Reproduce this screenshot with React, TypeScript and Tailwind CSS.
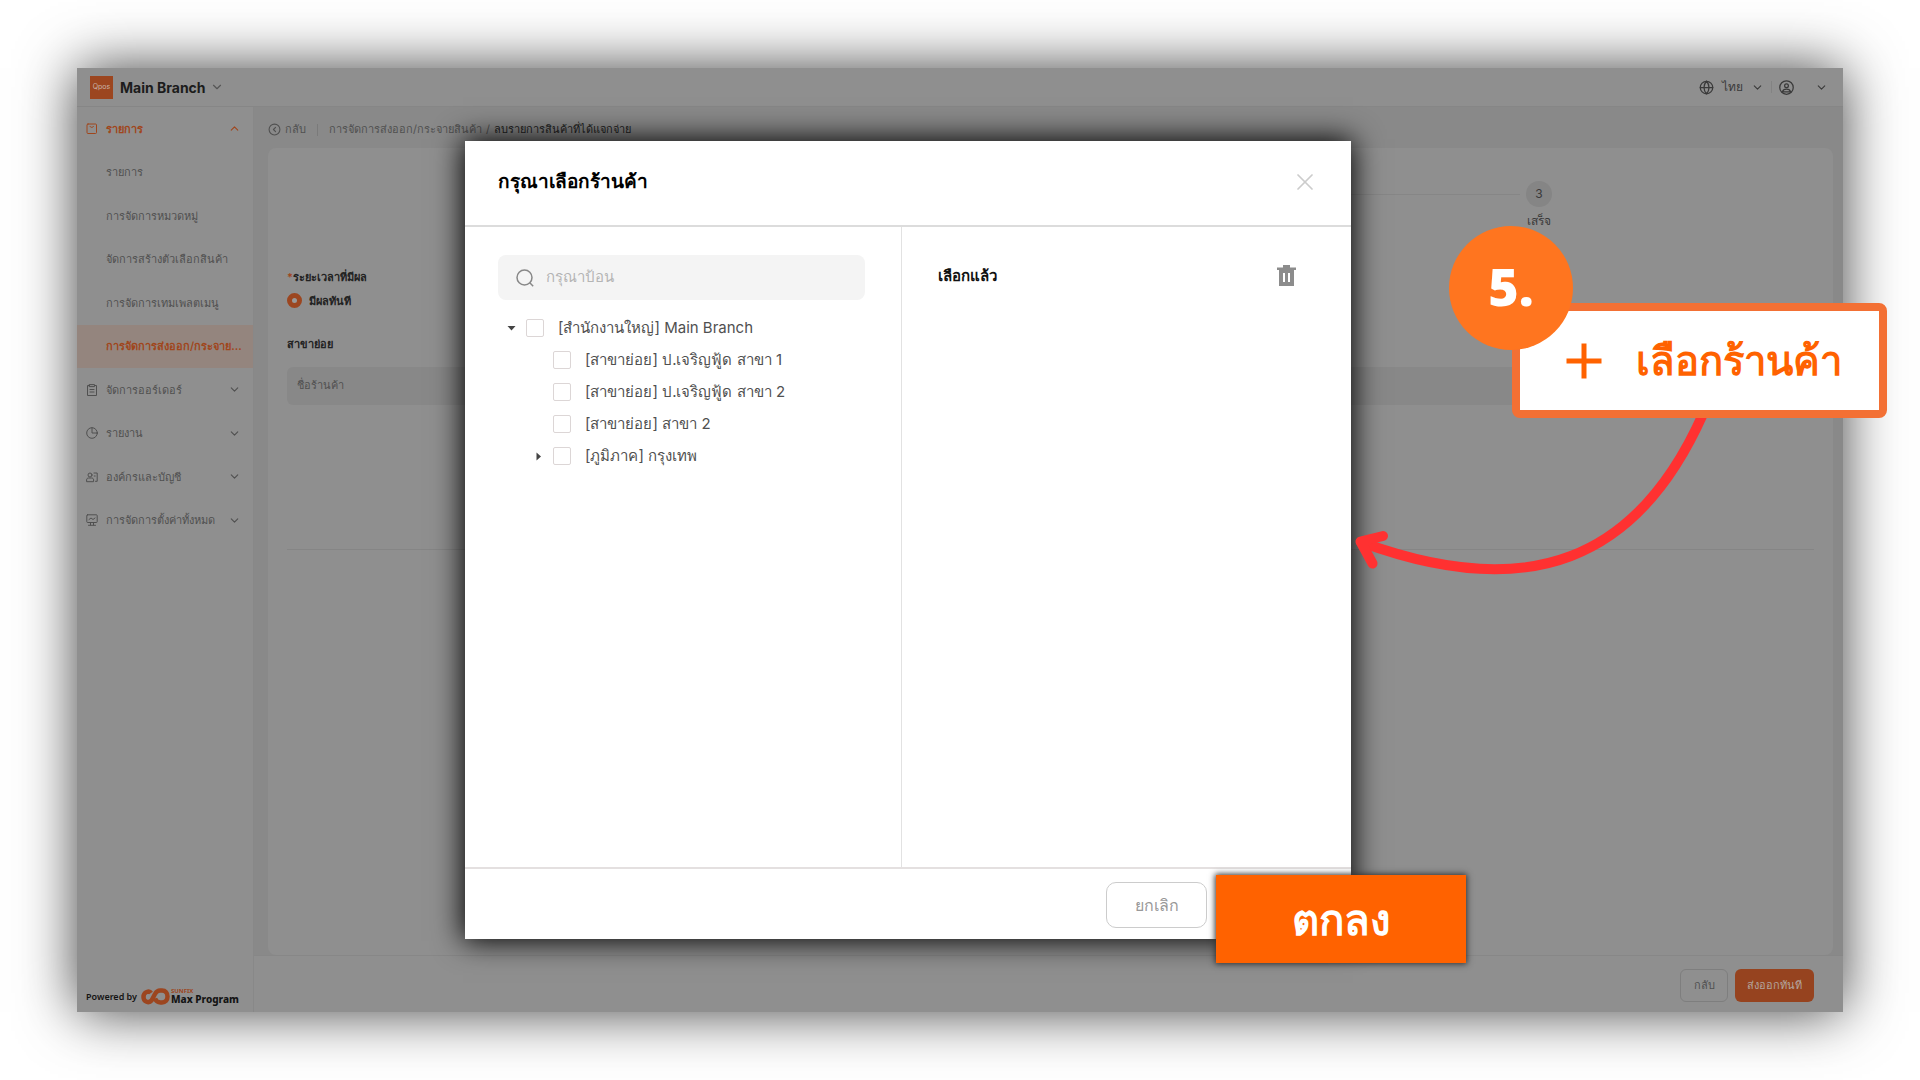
import type { ReactNode } from "react";
import { ChevronDown, ChevronUp, CircleChevronLeft, Globe, Plus, X } from "lucide-react";

const subItems = [
  { label: "รายการ" },
  { label: "การจัดการหมวดหมู่" },
  { label: "จัดการสร้างตัวเลือกสินค้า" },
  { label: "การจัดการเทมเพลตเมนู" },
  { label: "การจัดการส่งออก/กระจาย...", active: true },
];

const groups = [
  { label: "จัดการออร์เดอร์", icon: <OrderIcon /> },
  { label: "รายงาน", icon: <ClockIcon /> },
  { label: "องค์กรและบัญชี", icon: <PeopleIcon /> },
  { label: "การจัดการตั้งค่าทั้งหมด", icon: <BoardIcon /> },
];

const branches = [
  { label: "[สำนักงานใหญ่] Main Branch", level: 0, caret: "down" },
  { label: "[สาขาย่อย] ป.เจริญฟู้ด สาขา 1", level: 1 },
  { label: "[สาขาย่อย] ป.เจริญฟู้ด สาขา 2", level: 1 },
  { label: "[สาขาย่อย] สาขา 2", level: 1 },
  { label: "[ภูมิภาค] กรุงเทพ", level: 1, caret: "right" },
];

function Svg({ size = 12, children }: { size?: number; children: ReactNode }) {
  return (
    <svg width={size} height={size} viewBox="0 0 12 12" fill="none" stroke="currentColor" strokeWidth="1" strokeLinecap="round" strokeLinejoin="round">
      {children}
    </svg>
  );
}

function MenuIcon() {
  return (
    <Svg>
      <rect x="1" y="1" width="9.5" height="9.5" rx="1" />
      <path d="M4 3.5c.5 1.3 3 1.3 3.5 0" />
    </Svg>
  );
}

function OrderIcon() {
  return (
    <Svg>
      <path d="M3.500 1.500H1.500v10h9v-10h-2M3.500 .6h5v2h-5zM4 5.500h4M4 8h4" />
    </Svg>
  );
}

function ClockIcon() {
  return (
    <Svg>
      <circle cx="6" cy="6" r="5.3" />
      <path d="M6 .8V6h5.2" />
    </Svg>
  );
}

function PeopleIcon() {
  return (
    <Svg>
      <circle cx="4" cy="4" r="2" />
      <path d="M.6 10.300V9c0-1.300.8-2 2-2h3c1.200 0 2 .7 2 2v1.300zM8 2h3.200v8.300H9.500M8.200 5h1" />
    </Svg>
  );
}

function BoardIcon() {
  return (
    <Svg>
      <rect x=".8" y=".8" width="10.400" height="7.700" rx=".8" />
      <path d="M3 5.500l2-1.500 2 1.500 2-1.500M2.500 11.300h7M4.500 8.500v2.500M7.500 8.500v2.500" />
    </Svg>
  );
}

function UserIcon() {
  return (
    <Svg size={15}>
      <circle cx="6" cy="6" r="5.400" />
      <circle cx="6" cy="4.500" r="1.500" />
      <path d="M2.800 9.500c.6-3 5.800-3 6.400 0z" />
    </Svg>
  );
}

function TrashIcon() {
  return (
    <svg width="19" height="21" viewBox="0 0 19 21" fill="currentColor">
      <path d="M6 0h7v2.500h6V5H0V2.500h6z" />
      <path fillRule="evenodd" d="M2 5h15v16H2zM6 8v9h2V8zM11 8v9h2V8z" />
    </svg>
  );
}

function Header() {
  return (
    <header className="flex h-[39px] items-center border-b border-[#868686] bg-[#8f8f8f] pl-[13px] pr-[15px]">
      <div className="flex size-[23px] items-center justify-center bg-[#9c4620] text-[7px] text-[#c9b5aa]">Qpos</div>
      <button className="ml-[7px] flex items-center gap-1 text-[14px] font-bold text-[#1c1c1c]">
        Main Branch <ChevronDown size={14} className="text-[#555]" />
      </button>
      <div className="ml-auto flex items-center text-[#3a3a3a]">
        <button className="flex items-center gap-2 text-[12px]">
          <Globe size={15} strokeWidth={2} />
          ไทย
          <ChevronDown size={13} />
        </button>
        <span className="mx-[7px] h-3 w-px bg-[#838383]" />
        <button aria-label="account" className="flex items-center gap-[21px]">
          <UserIcon />
          <ChevronDown size={13} />
        </button>
      </div>
    </header>
  );
}

function Sidebar() {
  return (
    <aside className="flex w-[177px] shrink-0 flex-col border-r border-[#888] bg-[#8f8f8f] text-[11px] text-[#505050]">
      <nav className="grid h-[435px] grid-rows-10">
        <button className="flex items-center gap-2 pl-[9px] pr-3 font-semibold text-[#a0461c]">
          <MenuIcon />
          รายการ
          <ChevronUp size={13} className="ml-auto" />
        </button>
        {subItems.map((item) => (
          <a
            key={item.label}
            href="#"
            className={`flex items-center whitespace-nowrap pl-[29px] ${item.active ? "bg-[#94857e] font-semibold text-[#a0461c]" : ""}`}
          >
            {item.label}
          </a>
        ))}
        {groups.map((group) => (
          <button key={group.label} className="flex items-center gap-2 whitespace-nowrap pl-[9px] pr-3">
            {group.icon}
            {group.label}
            <ChevronDown size={13} className="ml-auto" />
          </button>
        ))}
      </nav>
      <div className="mt-auto flex h-[31px] items-center pl-[9px] font-['Noto_Sans',sans-serif] text-[#141414]">
        <span className="text-[9px] font-semibold">Powered by</span>
        <svg className="ml-1" width="29" height="17" viewBox="0 0 29 17" fill="none" stroke="#9c4620" strokeWidth="4.500">
          <path d="M10 5C8.500 2.500 2.500 3.500 2.500 9c0 5 5.500 6.500 8 3.500L14 6c1.500-2.600 2.500-3.500 5-3.500h2c3.500 0 5.500 2.500 5.500 6s-2 6-5.500 6h-1.500c-3 0-4.500-1.500-5.500-4" />
        </svg>
        <span className="ml-px flex flex-col">
          <span className="text-[6px] font-bold leading-[6px] text-[#9c4620]">SUNFIX</span>
          <span className="text-[10px] font-extrabold leading-[11px]">Max Program</span>
        </span>
      </div>
    </aside>
  );
}

function Content() {
  return (
    <main className="flex min-w-0 flex-1 flex-col bg-[#898989]">
      <div className="flex h-[41px] items-center pl-[14px] pt-1 text-[11px] text-[#505050]">
        <a href="#" className="flex items-center gap-1">
          <CircleChevronLeft size={13} />
          กลับ
        </a>
        <span className="mx-[11px] h-3 w-px bg-[#7a7a7a]" />
        <a href="#">การจัดการส่งออก/กระจายสินค้า</a>
        <span className="mx-1">/</span>
        <span className="font-medium text-[#222]">ลบรายการสินค้าที่ได้แจกจ่าย</span>
      </div>

      <section className="ml-[14px] mr-[10px] flex-1 rounded-lg bg-[#8f8f8f] px-[19px] pt-[33px]">
        <div className="flex h-[88px] items-start justify-end pr-[262px] text-[12px] text-[#3a3a3a]">
          <span className="mr-[6px] mt-[13px] h-px w-[700px] bg-[#868686]" />
          <div className="flex w-[26px] flex-col items-center gap-[5px] whitespace-nowrap">
            <span className="flex size-[26px] items-center justify-center rounded-full bg-[#858585]">3</span>
            เสร็จ
          </div>
        </div>
        <fieldset className="text-[11px] font-semibold text-[#222]">
          <legend>
            <span className="text-[#a0461c]">*</span>ระยะเวลาที่มีผล
          </legend>
          <label className="mt-[7px] flex items-center gap-[7px]">
            <input type="radio" name="time" defaultChecked className="size-[15px] appearance-none rounded-full border-[5px] border-[#9c4620] bg-[#999]" />
            มีผลทันที
          </label>
        </fieldset>
        <h3 className="mt-[27px] text-[11px] font-semibold text-[#222]">สาขาย่อย</h3>
        <table className="mt-[14px] w-full text-left text-[11px] text-[#505050]">
          <thead>
            <tr>
              <th className="h-[38px] rounded-md bg-[#888] pl-[10px] font-normal">ชื่อร้านค้า</th>
            </tr>
          </thead>
          <tbody>
            <tr>
              <td className="h-[145px] border-b border-[#858585]" />
            </tr>
          </tbody>
        </table>
      </section>

      <footer className="flex h-[57px] items-center justify-end gap-[7px] border-t border-[#878787] bg-[#8f8f8f] pr-[29px] pt-0.5 text-[11px] font-medium">
        <button className="h-[33px] w-12 rounded-md border border-[#7e7e7e] text-[#505050]">กลับ</button>
        <button className="h-[33px] w-[79px] rounded-md bg-[#96431f] text-[#b3a59d]">ส่งออกทันที</button>
      </footer>
    </main>
  );
}

function ShopDialog() {
  return (
    <div
      role="dialog"
      aria-label="กรุณาเลือกร้านค้า"
      className="absolute left-[465px] top-[141px] flex h-[798px] w-[886px] flex-col bg-white shadow-[0_0_28px_2px_#000]"
    >
      <div className="flex h-[86px] items-center justify-between border-b-2 border-[#dcdcdc] pb-0.5 pl-[33px] pr-8">
        <h2 className="text-[19px] font-bold text-black">กรุณาเลือกร้านค้า</h2>
        <button aria-label="close" className="text-[#ccc]">
          <X size={28} strokeWidth={1.5} />
        </button>
      </div>

      <div className="flex flex-1">
        <div className="w-[437px] border-r border-[#e2e2e2] pl-[33px] pr-9 pt-7">
          <label className="flex h-[45px] items-center gap-3 rounded-lg bg-[#f4f4f4] pl-[18px] text-[#888]">
            <svg width="18" height="18" viewBox="0 0 18 18" fill="none" stroke="currentColor" strokeWidth="1.500">
              <circle cx="8.500" cy="8.500" r="7.500" />
              <path d="M13.800 13.800l3.400 3.400" />
            </svg>
            <input type="text" placeholder="กรุณาป้อน" className="min-w-0 flex-1 text-[15px] outline-none placeholder:text-[#b5b5b5]" />
          </label>
          <ul className="mt-3 text-[15px] text-[#505050]">
            {branches.map((b) => (
              <li key={b.label} className={`flex h-8 items-center ${b.level ? "pl-9" : "pl-[9px]"}`}>
                <span className="flex w-[19px] text-[#444]">
                  {b.caret === "down" && (
                    <svg width="9" height="9" viewBox="0 0 9 9" fill="currentColor"><path d="M.5 2h8L4.500 6.500z" /></svg>
                  )}
                  {b.caret === "right" && (
                    <svg width="9" height="9" viewBox="0 0 9 9" fill="currentColor"><path d="M2.500 .5v8l4.500-4z" /></svg>
                  )}
                </span>
                <label className="flex items-center gap-[14px] whitespace-nowrap">
                  <input type="checkbox" className="size-[18px] appearance-none rounded-xs border border-[#dcd6d6] bg-white" />
                  {b.label}
                </label>
              </li>
            ))}
          </ul>
        </div>
        <div className="flex flex-1 items-start justify-between pl-9 pr-[55px] pt-[38px]">
          <h3 className="text-[15px] font-bold text-[#111]">เลือกแล้ว</h3>
          <button aria-label="delete" className="text-[#8c8c8c]">
            <TrashIcon />
          </button>
        </div>
      </div>

      <div className="flex h-[72px] items-center justify-end border-t-2 border-[#e4e0e0] pr-36 pt-0.5">
        <button className="h-[46px] w-[101px] rounded-[10px] border border-[#ccc] text-[16px] font-medium text-[#999]">ยกเลิก</button>
      </div>
      <button className="absolute left-[751px] top-[734px] h-22 w-[250px] bg-[#ff6200] text-[42px] font-bold text-white shadow-[0_0_6px_1px_#333]">
        ตกลง
      </button>
    </div>
  );
}

function Callout() {
  return (
    <>
      <svg className="absolute left-[1340px] top-[400px]" width="400" height="200" viewBox="1340 400 400 200" fill="none" stroke="#ff3131" strokeWidth="10" strokeLinecap="round" strokeLinejoin="round">
        <path d="M1703 414C1638 560 1530 604 1361 542" />
        <path d="M1383 536l-22.500 5.500 12 22" />
      </svg>
      <button className="absolute left-[1512px] top-[303px] flex h-[115px] w-[375px] items-center gap-[22px] rounded-lg border-8 border-[#f37034] bg-white pl-[34px] text-[40px] font-bold text-[#ff6200]">
        <Plus size={60} strokeWidth={2} strokeLinecap="butt" />
        เลือกร้านค้า
      </button>
      <div className="absolute left-[1449px] top-[226px] flex size-[124px] items-center justify-center rounded-full bg-[#ff751f] pb-1 font-['Open_Sans',sans-serif] text-[52px] font-extrabold text-white">
        5.
      </div>
    </>
  );
}

export default function App() {
  return (
    <div className="relative flex min-h-screen overflow-hidden bg-white px-[77px] py-[68px] font-['Inter','Noto_Sans',sans-serif]">
      <div className="flex flex-1 flex-col shadow-[0_0_54px_rgba(0,0,0,0.75)]">
        <Header />
        <div className="flex flex-1">
          <Sidebar />
          <Content />
        </div>
      </div>
      <ShopDialog />
      <Callout />
    </div>
  );
}
